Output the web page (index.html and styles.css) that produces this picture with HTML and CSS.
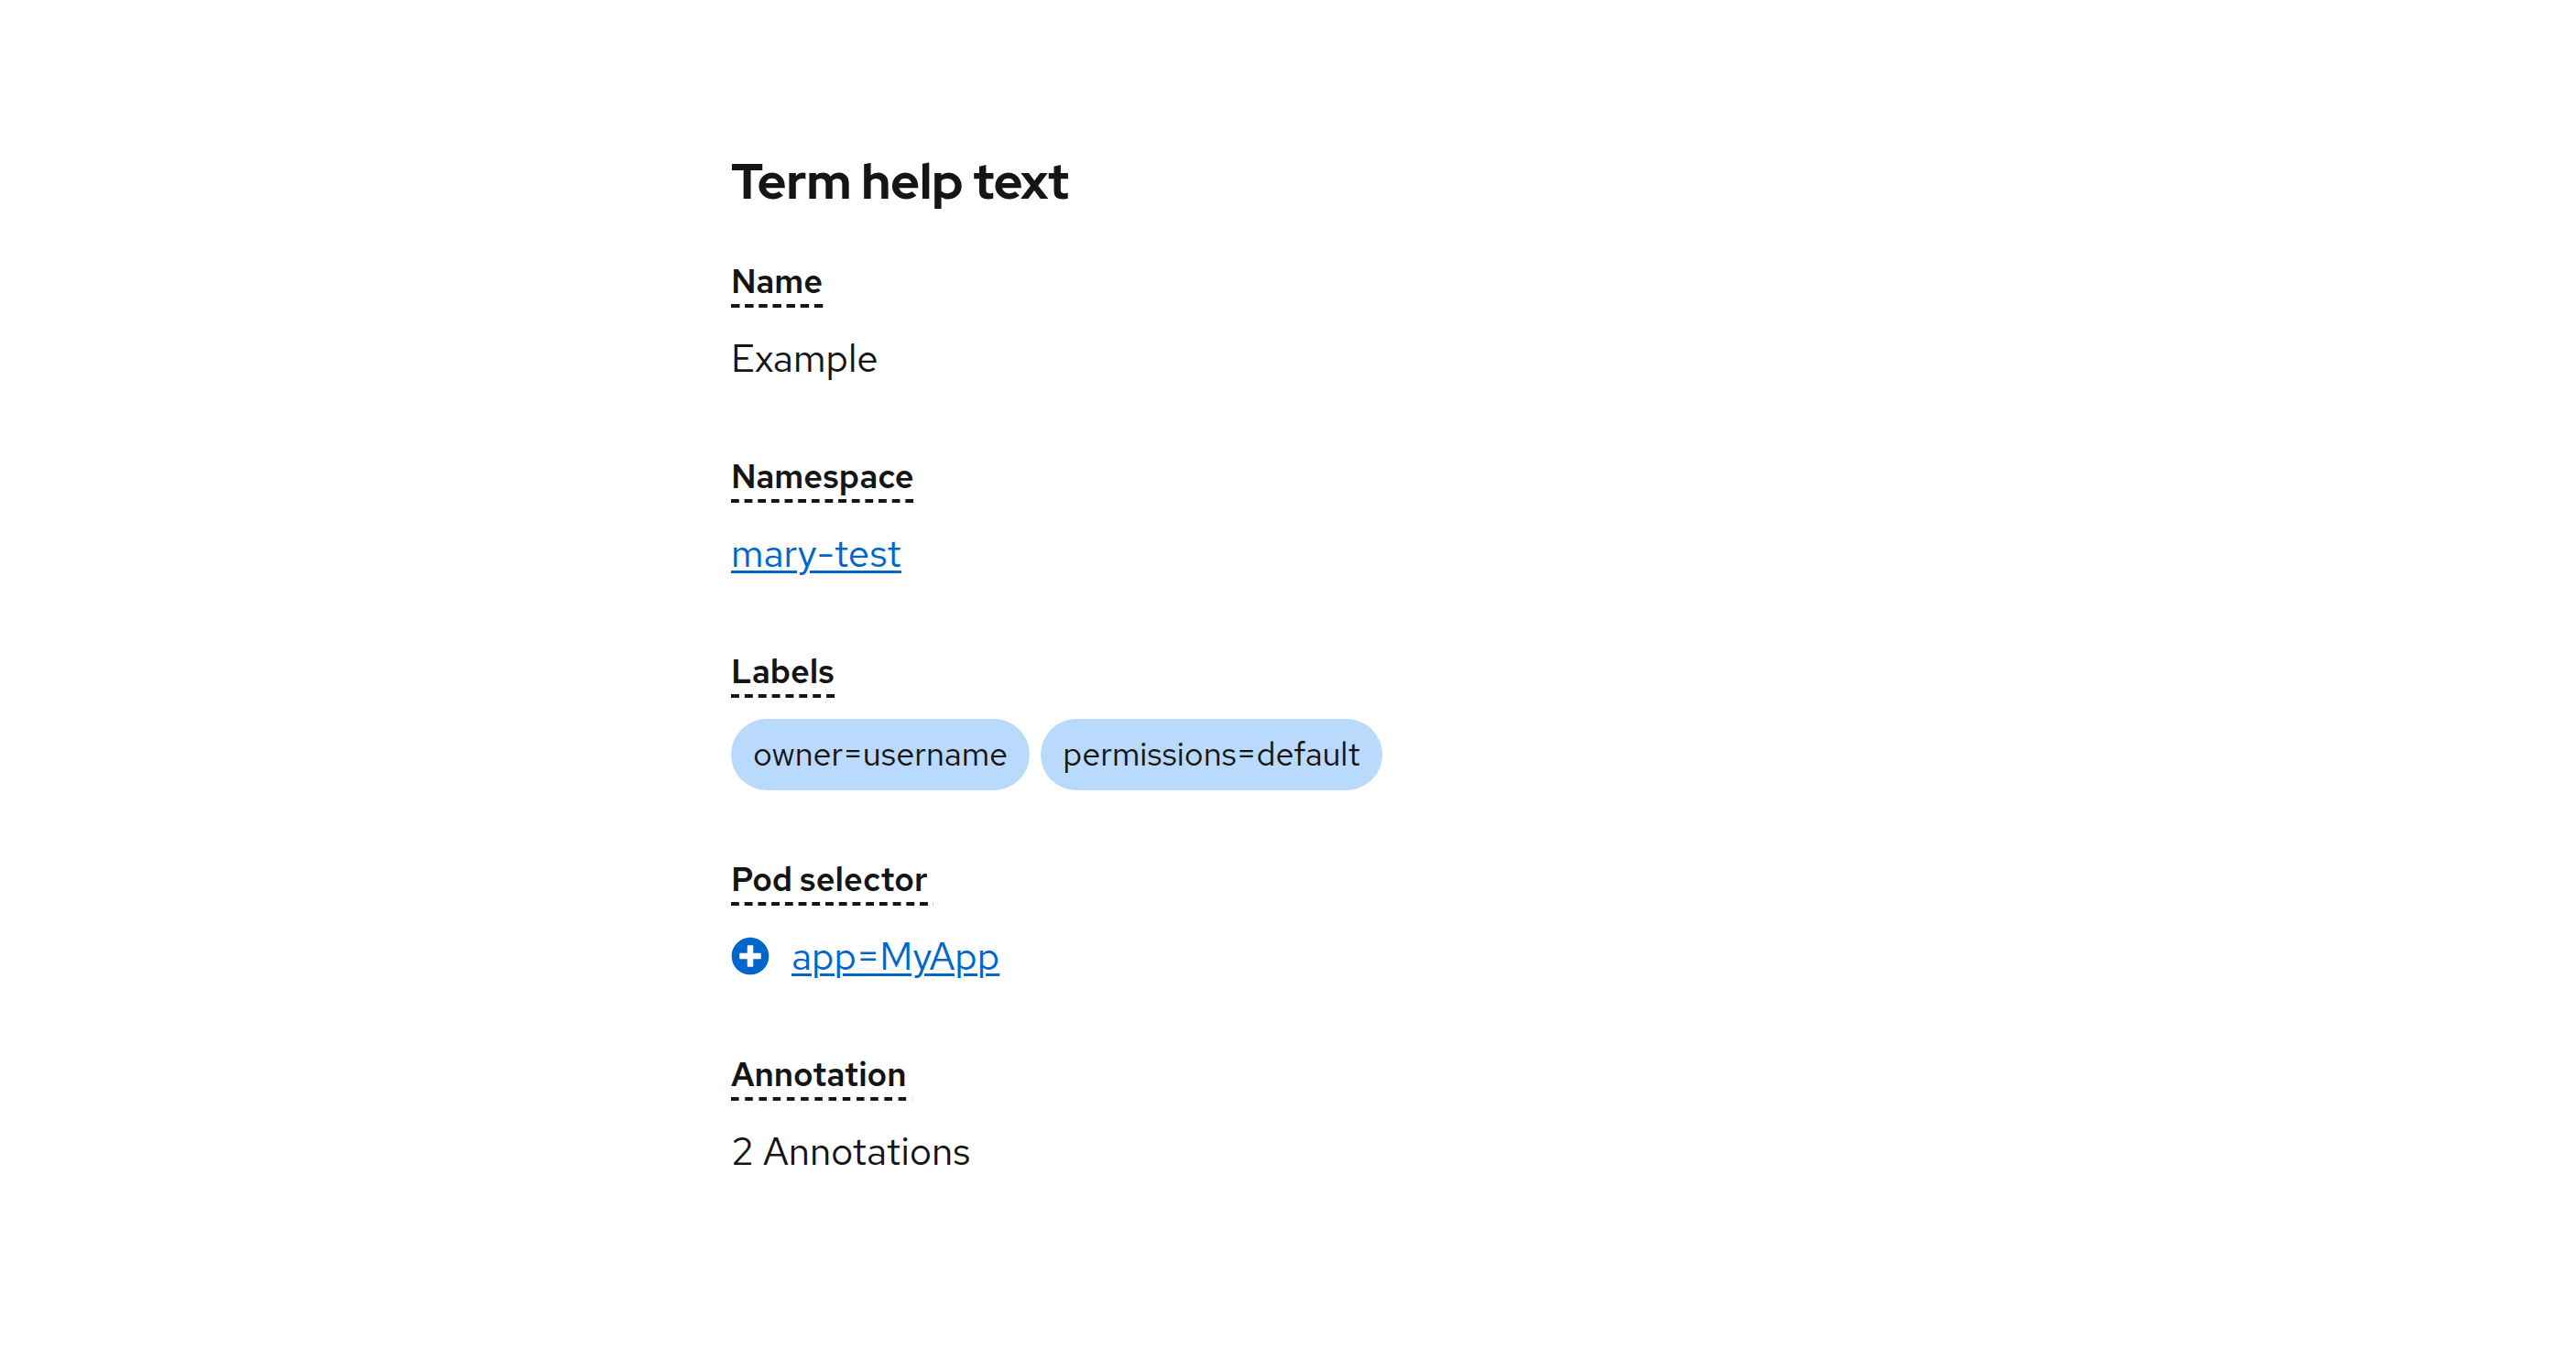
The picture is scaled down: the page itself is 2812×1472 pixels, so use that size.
FILE: index.html
```html
<!DOCTYPE html>
<html lang="en">
<head>
<meta charset="utf-8">
<meta name="viewport" content="width=device-width, initial-scale=1">
<title>Term help text</title>
<link rel="stylesheet" href="styles.css">
</head>
<body>
<main class="page">
  <h2 class="title">Term help text</h2>
  <dl class="description-list">
    <div class="group">
      <dt class="term"><button type="button" class="help-text">Name</button></dt>
      <dd class="description">Example</dd>
    </div>
    <div class="group">
      <dt class="term"><button type="button" class="help-text">Namespace</button></dt>
      <dd class="description"><a class="link" href="#">mary-test</a></dd>
    </div>
    <div class="group">
      <dt class="term"><button type="button" class="help-text">Labels</button></dt>
      <dd class="description label-group">
        <span class="label">owner=username</span>
        <span class="label">permissions=default</span>
      </dd>
    </div>
    <div class="group">
      <dt class="term"><button type="button" class="help-text">Pod selector</button></dt>
      <dd class="description icon-row">
        <svg class="icon" viewBox="0 0 512 512" aria-hidden="true"><path fill="currentColor" d="M256 8C119 8 8 119 8 256s111 248 248 248 248-111 248-248S393 8 256 8zm144 276c0 6.6-5.4 12-12 12h-92v92c0 6.6-5.4 12-12 12h-56c-6.6 0-12-5.4-12-12v-92h-92c-6.6 0-12-5.4-12-12v-56c0-6.6 5.4-12 12-12h92v-92c0-6.6 5.4-12 12-12h56c6.6 0 12 5.4 12 12v92h92c6.6 0 12 5.4 12 12v56z"/></svg>
        <a class="link" href="#">app=MyApp</a>
      </dd>
    </div>
    <div class="group">
      <dt class="term"><button type="button" class="help-text">Annotation</button></dt>
      <dd class="description">2 Annotations</dd>
    </div>
  </dl>
</main>
</body>
</html>
```
FILE: styles.css
```css
:root {
  --text: #151515;
  --link: #0066cc;
  --label: #b9dafc;
}

body {
  margin: 0;
  background: #fff;
  color: var(--text);
  font-family: "Red Hat Text", Lato, sans-serif;
  font-size: 42px;
  line-height: 64px;
}

.page {
  max-width: 1216px;
  margin: 0 auto;
  padding: 163px 0;
}

.title {
  margin: 0 0 46px;
  font-family: "Red Hat Display", Lato, sans-serif;
  font-size: 54px;
  font-weight: 800;
  line-height: 70px;
}

.description-list {
  display: grid;
  gap: 69px;
  margin: 0;
}

.group {
  display: grid;
  gap: 23px;
}

.term {
  display: flex;
}

/* The right padding is one gap wide, so the last dash ends with the text. */
.help-text {
  margin: 0;
  padding: 1px 6px 2px 0;
  border: 0;
  background: linear-gradient(90deg, var(--text) 9px, transparent 9px) left bottom / 15px 4px;
  background-repeat: round no-repeat;
  color: inherit;
  font: inherit;
  font-size: 36px;
  font-weight: 600;
  line-height: 54px;
  cursor: pointer;
}

.description {
  margin: 0;
}

.link {
  color: var(--link);
  text-decoration: underline;
  text-decoration-thickness: 3px;
  text-underline-offset: 4px;
}

.label-group {
  display: flex;
  flex-wrap: wrap;
  gap: 12px;
}

.label {
  padding: 10px 24px 12px;
  border-radius: 39px;
  background: var(--label);
  font-size: 36px;
  line-height: 56px;
}

.icon-row {
  display: flex;
  align-items: center;
  gap: 24px;
}

.icon {
  width: 42px;
  height: 42px;
  color: var(--link);
}
```
